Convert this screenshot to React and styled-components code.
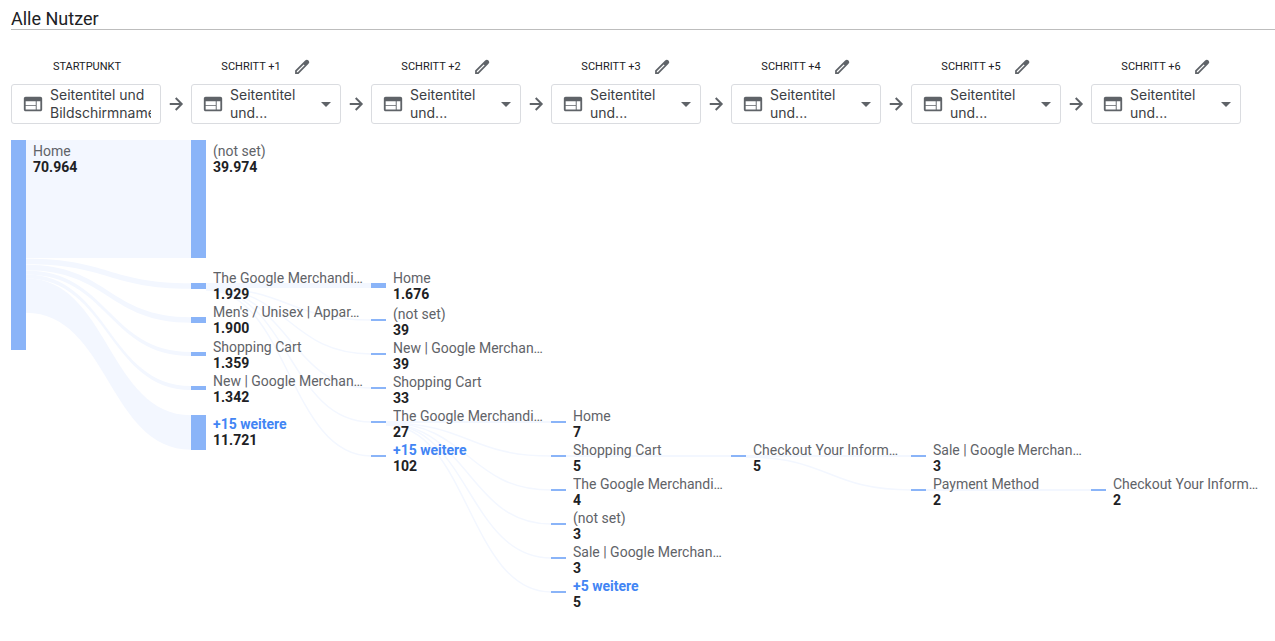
import React from "react";
import styled, { createGlobalStyle } from "styled-components";

const GlobalStyle = createGlobalStyle`
  * {
    box-sizing: border-box;
  }
  body {
    margin: 0;
    background: #fff;
    color: #202124;
    font-family: Roboto, "Liberation Sans", sans-serif;
  }
`;

//LAYOUT
const Page = styled.main`
  padding: 9px 0 24px 11px;
`;
const Title = styled.h1`
  margin: 0;
  border-bottom: 1px solid #bdbdbd;
  font-size: 18px;
  font-weight: 400;
  line-height: 20px;
`;
const Steps = styled.div`
  display: flex;
  padding-top: 25px;
`;

//STEPS
const StepItem = styled.section`
  flex: none;
  width: 180px;
`;
const StepHead = styled.div`
  display: flex;
  align-items: center;
  justify-content: center;
  gap: 10px;
  width: 152px;
  height: 24px;
  margin-bottom: 5px;
`;
const StepName = styled.h2`
  margin: 0;
  color: #202124;
  font-size: 11px;
  font-weight: 400;
  line-height: 16px;
`;
const EditButton = styled.button`
  display: flex;
  padding: 2px;
  border: 0;
  background: none;
  cursor: pointer;
`;
const StepRow = styled.div`
  display: flex;
  align-items: center;
`;
const Field = styled.div`
  position: relative;
  display: flex;
  align-items: center;
  gap: 6px;
  width: 150px;
  height: 40px;
  padding: 0 9px 0 10px;
  border: 1px solid #dadce0;
  border-radius: 3px;
`;
const FieldText = styled.span`
  flex: 1;
  min-width: 0;
  overflow: hidden;
  color: #3c4043;
  font-family: Inter, sans-serif;
  font-size: 14px;
  line-height: 18px;
`;
const FieldSelect = styled.select`
  position: absolute;
  inset: 0;
  width: 100%;
  opacity: 0;
  cursor: pointer;
`;
const ArrowBox = styled.div`
  display: flex;
  justify-content: center;
  width: 30px;
`;
const Icon = styled.svg`
  flex: none;
  display: block;
  fill: #5f6368;
`;

//CHART
const Chart = styled.div`
  position: relative;
  height: 480px;
  margin-top: 16px;
`;
const Links = styled.svg`
  display: block;
  overflow: visible;
`;
const Band = styled.path`
  fill: #f3f7ff;
`;
const Thread = styled.path`
  fill: none;
  stroke: #f3f7ff;
`;
const Bar = styled.div`
  position: absolute;
  width: 15px;
  background: #8ab4f8;
`;
const Label = styled.div`
  position: absolute;
  width: 152px;
  font-size: 14px;
  line-height: 16px;
`;
const Name = styled.div`
  overflow: hidden;
  color: #5f6368;
  text-overflow: ellipsis;
  white-space: nowrap;
`;
const More = styled.a`
  display: block;
  color: #4285f4;
  font-weight: 700;
  text-decoration: none;
`;
const Count = styled.div`
  font-weight: 700;
`;

const columnWidth = 180;
const barWidth = 15;

const steps = ["Startpunkt", "Schritt +1", "Schritt +2", "Schritt +3", "Schritt +4", "Schritt +5", "Schritt +6"];

// y and height describe the bar, label is the top of the text beside it
const nodes = [
  { col: 0, y: 0, height: 210, label: 3, name: "Home", count: "70.964" },
  { col: 1, y: 0, height: 118, label: 3, name: "(not set)", count: "39.974" },
  { col: 1, y: 143, height: 6, label: 130, name: "The Google Merchandi…", count: "1.929" },
  { col: 1, y: 177, height: 6, label: 164, name: "Men's / Unisex | Appar…", count: "1.900" },
  { col: 1, y: 212, height: 4, label: 199, name: "Shopping Cart", count: "1.359" },
  { col: 1, y: 246, height: 4, label: 233, name: "New | Google Merchan…", count: "1.342" },
  { col: 1, y: 275, height: 35, label: 276, name: "+15 weitere", count: "11.721", more: true },
  { col: 2, y: 143, height: 5, label: 130, name: "Home", count: "1.676" },
  { col: 2, y: 179, height: 2, label: 166, name: "(not set)", count: "39" },
  { col: 2, y: 213, height: 2, label: 200, name: "New | Google Merchan…", count: "39" },
  { col: 2, y: 247, height: 2, label: 234, name: "Shopping Cart", count: "33" },
  { col: 2, y: 281, height: 2, label: 268, name: "The Google Merchandi…", count: "27" },
  { col: 2, y: 315, height: 2, label: 302, name: "+15 weitere", count: "102", more: true },
  { col: 3, y: 281, height: 2, label: 268, name: "Home", count: "7" },
  { col: 3, y: 315, height: 2, label: 302, name: "Shopping Cart", count: "5" },
  { col: 3, y: 349, height: 2, label: 336, name: "The Google Merchandi…", count: "4" },
  { col: 3, y: 383, height: 2, label: 370, name: "(not set)", count: "3" },
  { col: 3, y: 417, height: 2, label: 404, name: "Sale | Google Merchan…", count: "3" },
  { col: 3, y: 451, height: 2, label: 438, name: "+5 weitere", count: "5", more: true },
  { col: 4, y: 315, height: 2, label: 302, name: "Checkout Your Inform…", count: "5" },
  { col: 5, y: 315, height: 2, label: 302, name: "Sale | Google Merchan…", count: "3" },
  { col: 5, y: 349, height: 2, label: 336, name: "Payment Method", count: "2" },
  { col: 6, y: 349, height: 2, label: 336, name: "Checkout Your Inform…", count: "2" },
];

// from and to are the middle of the link at either end
const links = [
  { col: 0, from: 59, to: 59, size: 118 },
  { col: 0, from: 121.5, to: 146, size: 5.7 },
  { col: 0, from: 127.5, to: 180, size: 5.6 },
  { col: 0, from: 132.5, to: 214, size: 4 },
  { col: 0, from: 136.5, to: 248, size: 4 },
  { col: 0, from: 155.5, to: 292.5, size: 34.6 },
  { col: 1, from: 145.5, to: 145.5, size: 5 },
  { col: 1, from: 148, to: 180, size: 1.5 },
  { col: 1, from: 148, to: 214, size: 1.5 },
  { col: 1, from: 149, to: 248, size: 1.5 },
  { col: 1, from: 149, to: 282, size: 1.5 },
  { col: 1, from: 150, to: 316, size: 1.5 },
  { col: 2, from: 282, to: 282, size: 2 },
  { col: 2, from: 283, to: 316, size: 1.5 },
  { col: 2, from: 283, to: 350, size: 1.5 },
  { col: 2, from: 284, to: 384, size: 1.5 },
  { col: 2, from: 284, to: 418, size: 1.5 },
  { col: 2, from: 285, to: 452, size: 1.5 },
  { col: 3, from: 316, to: 316, size: 2 },
  { col: 4, from: 316, to: 316, size: 2 },
  { col: 4, from: 317, to: 350, size: 1.5 },
  { col: 5, from: 350, to: 350, size: 2 },
];

const Link = ({ col, from, to, size }) => {
  const left = col * columnWidth + barWidth;
  const right = (col + 1) * columnWidth;
  const mid = (left + right) / 2;
  if (size <= 2) {
    return <Thread d={`M${left} ${from}C${mid} ${from} ${mid} ${to} ${right} ${to}`} strokeWidth={size} />;
  }
  const half = size / 2;
  const top = `M${left} ${from - half}C${mid} ${from - half} ${mid} ${to - half} ${right} ${to - half}`;
  const bottom = `V${to + half}C${mid} ${to + half} ${mid} ${from + half} ${left} ${from + half}Z`;
  return <Band d={top + bottom} />;
};

const Step = ({ name, first, last }) => (
  <StepItem>
    <StepHead>
      <StepName>{name.toUpperCase()}</StepName>
      {!first && (
        <EditButton aria-label={`${name} bearbeiten`}>
          <Icon width="18" height="18" viewBox="0 0 24 24">
            <path d="M20.700 3.300a3.200 3.200 0 0 0-4.500 0L2.800 16.700v4.500h4.500L20.700 7.800a3.200 3.200 0 0 0 0-4.500zM6.300 18.900H5.100v-1.200L14.300 8.500l1.200 1.200z" />
          </Icon>
        </EditButton>
      )}
    </StepHead>
    <StepRow>
      <Field>
        <Icon width="22" height="22" viewBox="0 0 24 24">
          <path d="M20 4H4c-1.100 0-2 .9-2 2v12c0 1.100.9 2 2 2h16c1.100 0 2-.9 2-2V6c0-1.100-.9-2-2-2zm-5 14H4v-4h11v4zm0-5H4V9h11v4zm5 5h-4V9h4v9z" />
        </Icon>
        <FieldText>{first ? "Seitentitel und Bildschirmname" : "Seitentitel und..."}</FieldText>
        {!first && (
          <>
            <Icon width="10" height="5" viewBox="0 0 10 5">
              <path d="M0 0h10L5 5z" />
            </Icon>
            <FieldSelect aria-label={name}>
              <option>Seitentitel und Bildschirmname</option>
            </FieldSelect>
          </>
        )}
      </Field>
      {!last && (
        <ArrowBox>
          <Icon width="20" height="20" viewBox="0 0 24 24">
            <path d="M12.500 4l-1.700 1.700 5.200 5.200H4.500v2.300H16l-5.200 5.200 1.700 1.700 8-8z" />
          </Icon>
        </ArrowBox>
      )}
    </StepRow>
  </StepItem>
);

const App = () => {
  return (
    <>
      <GlobalStyle />
      <Page>
        <Title>Alle Nutzer</Title>
        <Steps>
          {steps.map((name, i) => (
            <Step key={name} name={name} first={i === 0} last={i === steps.length - 1} />
          ))}
        </Steps>
        <Chart>
          <Links width="100%" height="100%" aria-hidden="true">
            {links.map((link) => (
              <Link key={`${link.col}-${link.to}`} {...link} />
            ))}
          </Links>
          {nodes.map((node) => (
            <React.Fragment key={`${node.col}-${node.y}`}>
              <Bar style={{ left: node.col * columnWidth, top: node.y, height: node.height }} />
              <Label style={{ left: node.col * columnWidth + 22, top: node.label }}>
                {node.more ? <More href="#">{node.name}</More> : <Name>{node.name}</Name>}
                <Count>{node.count}</Count>
              </Label>
            </React.Fragment>
          ))}
        </Chart>
      </Page>
    </>
  );
};

export default App;
